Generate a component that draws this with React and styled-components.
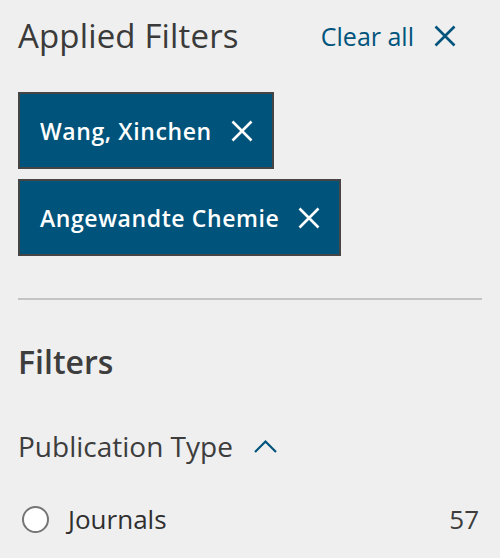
import styled, { createGlobalStyle } from "styled-components";

const GlobalStyle = createGlobalStyle`
  html, body {
    margin: 0;
    padding: 0;
    background: #efefef;
  }
  body {
    font-family: "Open Sans", "Noto Sans", sans-serif;
    color: #3d3d3d;
  }
`;

const Panel = styled.aside`
  width: 500px;
  box-sizing: border-box;
  padding: 14px 18px 0 18px;
`;

const HeaderRow = styled.div`
  display: flex;
  align-items: center;
  justify-content: space-between;
  padding-right: 26px;
`;

const Title = styled.h2`
  margin: 0;
  font-size: 33px;
  font-weight: 400;
  letter-spacing: 0.15px;
  color: #3a3a3a;
  line-height: 44px;
`;

const ClearButton = styled.button`
  display: flex;
  align-items: center;
  gap: 20px;
  border: none;
  background: none;
  padding: 0;
  font-family: inherit;
  font-size: 25px;
  color: #00547c;
  cursor: pointer;
`;

const ChipList = styled.div`
  display: flex;
  flex-direction: column;
  align-items: flex-start;
  gap: 10px;
  margin-top: 34px;
`;

const Chip = styled.div`
  display: flex;
  align-items: center;
  gap: 19px;
  height: 77px;
  box-sizing: border-box;
  padding: 0 19px 0 20px;
  background: #00537a;
  border: 2px solid #454545;
  color: #fff;
  font-size: 23px;
  font-weight: 600;
  letter-spacing: 0.6px;
`;

const Divider = styled.hr`
  margin: 42px 0 0 0;
  border: none;
  height: 2px;
  background: #c4c4c4;
`;

const SectionTitle = styled.h3`
  margin: 42px 0 0 0;
  font-size: 32px;
  font-weight: 600;
  line-height: 40px;
  color: #3d3d3d;
`;

const GroupHeader = styled.div`
  display: flex;
  align-items: center;
  gap: 21px;
  margin-top: 45px;
  font-size: 28px;
  color: #3d3d3d;
`;

const OptionRow = styled.label`
  display: flex;
  align-items: center;
  margin-top: 36px;
  font-size: 26px;
  color: #2f2f2f;
`;

const Radio = styled.span`
  width: 27px;
  height: 27px;
  box-sizing: border-box;
  border-radius: 50%;
  border: 2px solid #757575;
  background: #fff;
  margin: 0 19px 0 4px;
`;

const OptionLabel = styled.span`
  flex: 1;
`;

const Count = styled.span`
  margin-right: 3px;
  color: #3d3d3d;
`;

const CloseIcon = ({ color, size = 22 }) => (
  <svg width={size} height={size} viewBox="0 0 22 22" fill="none">
    <path d="M1.5 1.5 L20.5 20.5 M20.5 1.5 L1.5 20.5" stroke={color} strokeWidth="2.6" />
  </svg>
);

const ChevronUp = () => (
  <svg width="23" height="14" viewBox="0 0 23 14" fill="none">
    <path d="M1 13 L11.5 2.5 L22 13" stroke="#00547c" strokeWidth="2.2" />
  </svg>
);

const filters = ["Wang, Xinchen", "Angewandte Chemie"];

export default function App() {
  return (
    <>
      <GlobalStyle />
      <Panel>
        <HeaderRow>
          <Title>Applied Filters</Title>
          <ClearButton>
            Clear all
            <CloseIcon color="#00547c" size={22} />
          </ClearButton>
        </HeaderRow>
        <ChipList>
          {filters.map((f) => (
            <Chip key={f}>
              {f}
              <CloseIcon color="#fff" size={22} />
            </Chip>
          ))}
        </ChipList>
        <Divider />
        <SectionTitle>Filters</SectionTitle>
        <GroupHeader>
          Publication Type
          <ChevronUp />
        </GroupHeader>
        <OptionRow>
          <Radio />
          <OptionLabel>Journals</OptionLabel>
          <Count>57</Count>
        </OptionRow>
      </Panel>
    </>
  );
}
